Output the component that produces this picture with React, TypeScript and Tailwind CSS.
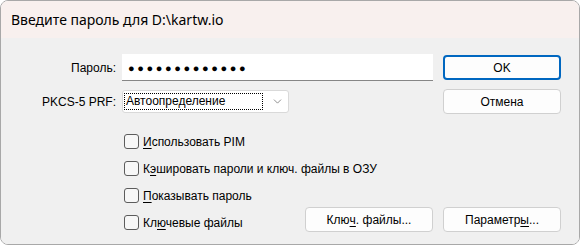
import { ChevronDown } from 'lucide-react';

const font = { fontFamily: '"Liberation Sans", Arial, sans-serif' };
const titleFont = { fontFamily: '"Noto Sans", "Open Sans", sans-serif' };

function Mn({ pre, u, post }: { pre?: string; u: string; post?: string }) {
  return (
    <>
      {pre}
      <span className="underline underline-offset-2">{u}</span>
      {post}
    </>
  );
}

function Btn({ children, primary, className = '' }: { children: React.ReactNode; primary?: boolean; className?: string }) {
  return (
    <button
      className={`h-[25px] rounded-[4px] bg-[#fdfdfd] text-[12px] text-black flex items-center justify-center ${
        primary ? 'border-2 border-[#0067c0]' : 'border border-[#d0d0d0]'
      } ${className}`}
    >
      {children}
    </button>
  );
}

function Check({ children }: { children: React.ReactNode }) {
  return (
    <div className="flex items-center h-[27px]">
      <span className="w-[15px] h-[15px] rounded-[3px] border border-[#5c5c5c] bg-[#f7f7f7] ml-[2px]" />
      <span className="ml-[4px] text-[12px] text-black">{children}</span>
    </div>
  );
}

export default function App() {
  return (
    <div className="w-[580px] h-[245px] bg-white" style={font}>
      <div className="w-full h-full flex flex-col border border-[#a8a8a8] rounded-lg overflow-hidden">
        <div className="h-[37px] shrink-0 bg-[#f8f0ee] flex items-center pl-[10px] text-[14px] text-black" style={titleFont}>
          Введите пароль для D:\kartw.io
        </div>
        <div className="flex-1 bg-[#f0f0f0] pt-[16px]">
          <div className="grid grid-cols-[121px_321px_118px] items-center">
            <div className="text-[12px] text-right pr-[6px]">Пароль:</div>
            <div className="w-[311px] h-[27px] bg-white border-b border-[#868686] flex items-center pl-[6px]">
              <span className="text-[11px] tracking-[2.6px] leading-none" style={titleFont}>●●●●●●●●●●●●●</span>
            </div>
            <Btn primary className="w-[118px]">OK</Btn>

            <div className="text-[12px] text-right pr-[6px] mt-[8px]">PKCS-5 PRF:</div>
            <div className="mt-[8px] w-[167px] h-[23px] bg-white border border-[#d9d9d9] rounded-[3px] flex items-center pl-[1px] pr-[4px]">
              <span className="flex-1 h-[17px] border border-dotted border-black text-[12px] leading-[15px] pl-[1px]">Автоопределение</span>
              <ChevronDown size={13} strokeWidth={1.2} className="ml-[8px] text-[#555]" />
            </div>
            <Btn className="w-[118px] mt-[8px]">Отмена</Btn>

            <div />
            <div className="mt-[14px] flex flex-col">
              <Check>
                <Mn u="И" post="спользовать PIM" />
              </Check>
              <Check>
                <Mn pre="К" u="э" post="шировать пароли и ключ. файлы в ОЗУ" />
              </Check>
              <Check>
                <Mn u="П" post="оказывать пароль" />
              </Check>
            </div>
            <div />

            <div />
            <div className="flex items-center">
              <Check>
                <Mn pre="Кл" u="ю" post="чевые файлы" />
              </Check>
              <Btn className="w-[128px] ml-auto mr-[10px] -mt-[6px]">
                <Mn pre="Клю" u="ч" post=". файлы..." />
              </Btn>
            </div>
            <Btn className="w-[118px] -mt-[6px]">
              <Mn pre="Параметр" u="ы" post="..." />
            </Btn>
          </div>
        </div>
      </div>
    </div>
  );
}
